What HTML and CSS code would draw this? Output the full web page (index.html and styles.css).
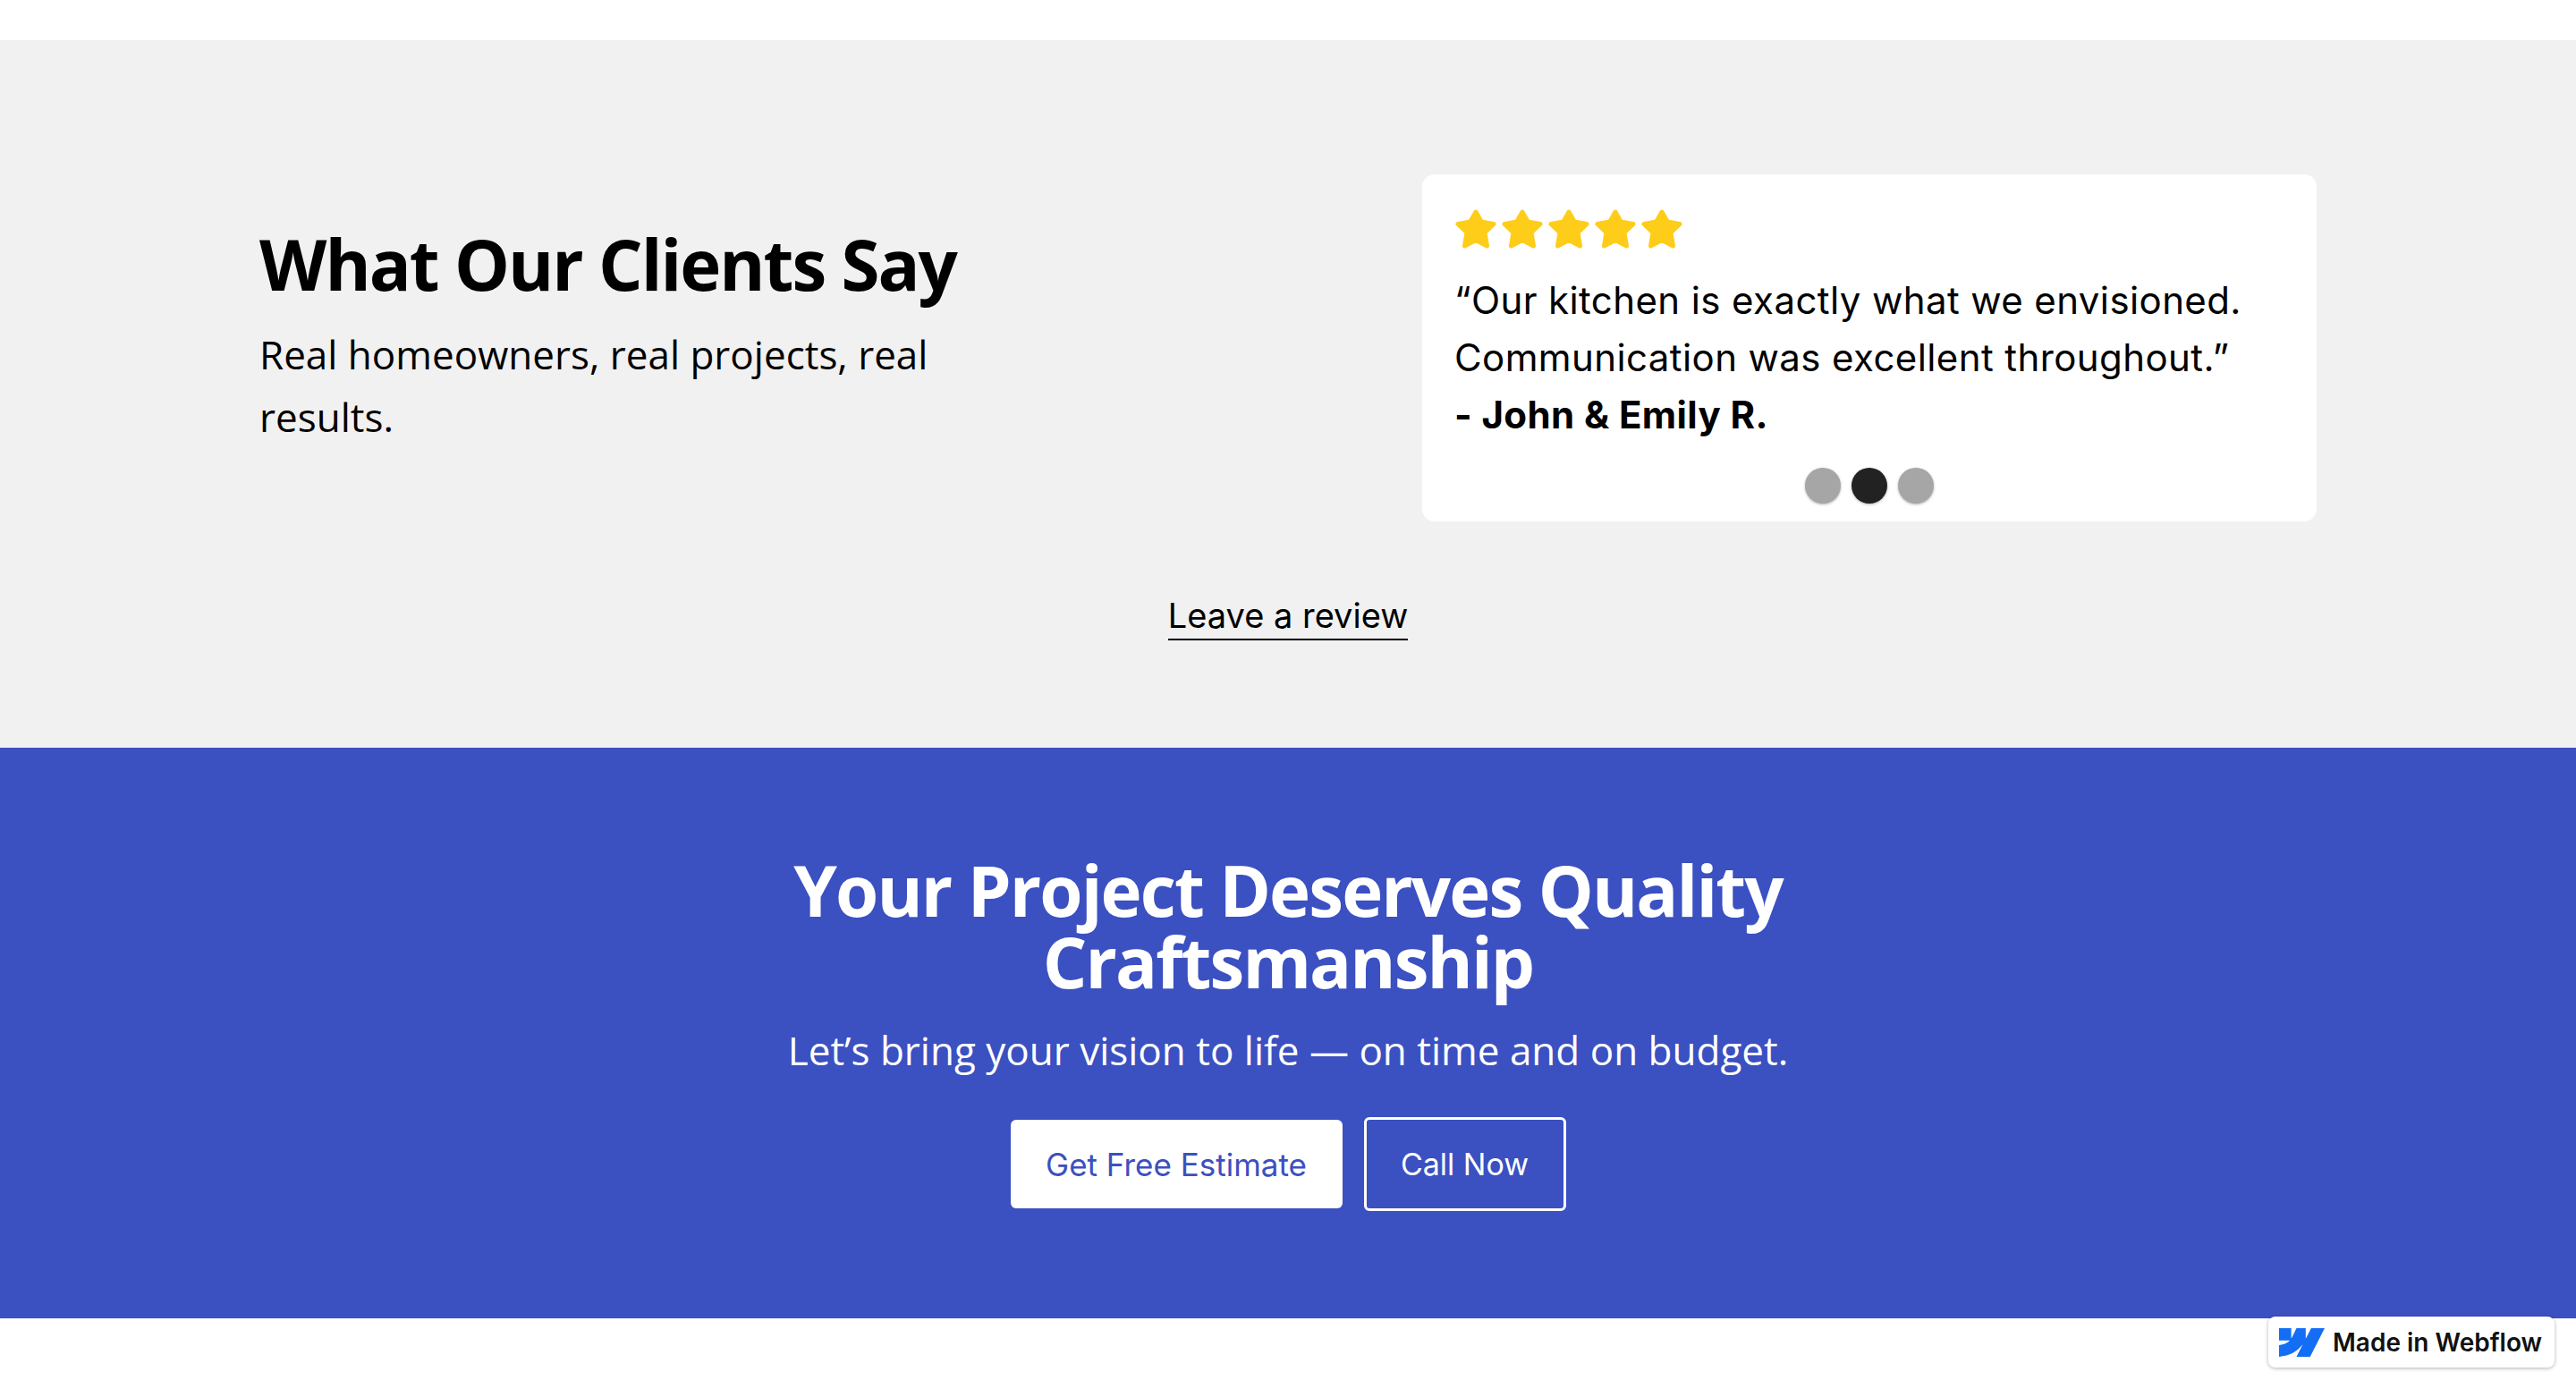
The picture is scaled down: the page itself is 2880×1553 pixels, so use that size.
FILE: index.html
```html
<!DOCTYPE html>
<html lang="en">
<head>
  <meta charset="UTF-8">
  <title>Testimonials</title>
  <link rel="stylesheet" href="styles.css">
</head>
<body>
  <section class="reviews">
    <div class="reviews-row">
      <div class="reviews-intro">
        <h2>What Our Clients Say</h2>
        <p>Real homeowners, real projects, real results.</p>
      </div>
      <div class="review-card">
        <div class="stars">
          <svg viewBox="0 0 46 44"><polygon points="23,3 29.300,14 43,16.500 33,26 35.500,41 23,34.500 10.500,41 13,26 3,16.500 16.700,14"/></svg>
          <svg viewBox="0 0 46 44"><polygon points="23,3 29.300,14 43,16.500 33,26 35.500,41 23,34.500 10.500,41 13,26 3,16.500 16.700,14"/></svg>
          <svg viewBox="0 0 46 44"><polygon points="23,3 29.300,14 43,16.500 33,26 35.500,41 23,34.500 10.500,41 13,26 3,16.500 16.700,14"/></svg>
          <svg viewBox="0 0 46 44"><polygon points="23,3 29.300,14 43,16.500 33,26 35.500,41 23,34.500 10.500,41 13,26 3,16.500 16.700,14"/></svg>
          <svg viewBox="0 0 46 44"><polygon points="23,3 29.300,14 43,16.500 33,26 35.500,41 23,34.500 10.500,41 13,26 3,16.500 16.700,14"/></svg>
        </div>
        <p class="quote">“Our kitchen is exactly what we envisioned.<br>Communication was excellent throughout.”<br><strong>- John &amp; Emily R.</strong></p>
        <div class="dots">
          <span class="dot"></span>
          <span class="dot active"></span>
          <span class="dot"></span>
        </div>
      </div>
    </div>
    <a class="review-link" href="#">Leave a review</a>
  </section>

  <section class="cta">
    <h2>Your Project Deserves Quality<br>Craftsmanship</h2>
    <p>Let’s bring your vision to life — on time and on budget.</p>
    <div class="cta-buttons">
      <a class="btn btn-white" href="#">Get Free Estimate</a>
      <a class="btn btn-outline" href="#">Call Now</a>
    </div>
  </section>

  <a class="wf-badge" href="#">
    <svg viewBox="0 4.515 24 14.970"><path d="M24 4.515L16.342 19.485H9.149L12.354 13.281H12.210C9.566 16.713 5.621 18.973 0 19.485V13.367C0 13.367 3.596 13.155 5.710 10.932H0V4.515H6.417V9.793L6.561 9.792L9.184 4.515H14.037V9.759L14.181 9.758L16.901 4.515H24Z"/></svg>
    <span>Made in Webflow</span>
  </a>
</body>
</html>
```
FILE: styles.css
```css
body { margin: 0; padding-top: 45px; background: white; font-family: "Open Sans", sans-serif; color: #000; height: 1508px; overflow: hidden; }
a { text-decoration: none; }

.reviews { background: #f1f1f1; height: 791px; box-sizing: border-box; padding: 150px 290px 0; }
.reviews-row { display: flex; justify-content: space-between; align-items: flex-start; }
.reviews-intro { width: 800px; padding-top: 60px; }
.reviews-intro h2 { margin: 0 0 26px; font-size: 78px; line-height: 80px; font-weight: 700; letter-spacing: -2px; }
.reviews-intro p { margin: 0; font-size: 44px; line-height: 70px; }

.review-card { width: 1000px; height: 388px; box-sizing: border-box; padding: 39px 37px 0; background: white; border-radius: 14px; font-family: Inter, sans-serif; }
.stars { display: flex; gap: 6px; height: 44px; }
.stars svg { width: 46px; height: 44px; fill: #fecd1a; stroke: #fecd1a; stroke-width: 5; stroke-linejoin: round; }
.quote { margin: 26px 0 0 -1px; font-size: 42px; line-height: 64px; letter-spacing: 0.4px; }
.quote strong { font-weight: 700; }
.dots { display: flex; justify-content: center; gap: 12px; margin-top: 27px; }
.dot { width: 40px; height: 40px; border-radius: 50%; background: #a6a6a6; box-shadow: 0 1px 3px rgba(0,0,0,0.3); }
.dot.active { background: #222; }

.review-link { display: block; width: fit-content; margin: 81px auto 0; padding-bottom: 2px; font-family: Inter, sans-serif; font-size: 38px; line-height: 48px; color: #000; border-bottom: 2px solid #000; }

.cta { background: #3b50c1; height: 638px; box-sizing: border-box; padding-top: 119px; text-align: center; color: white; }
.cta h2 { margin: 0; font-size: 78px; line-height: 80px; font-weight: 700; letter-spacing: -1.9px; }
.cta p { margin: 24px 0 0; font-size: 44px; line-height: 70px; }
.cta-buttons { display: flex; justify-content: center; align-items: center; gap: 24px; margin-top: 40px; }
.btn { font-family: Inter, sans-serif; font-size: 35px; border-radius: 6px; box-sizing: border-box; display: flex; align-items: center; justify-content: center; }
.btn-white { width: 371px; height: 99px; background: white; color: #3b50c1; }
.btn-outline { width: 226px; height: 105px; border: 3px solid white; color: white; font-size: 34px; }

.wf-badge { position: absolute; left: 2536px; top: 1472px; width: 320px; height: 57px; box-sizing: border-box; padding-left: 12px; display: flex; align-items: center; gap: 9px; background: white; border-radius: 8px; box-shadow: 0 1px 4px rgba(0,0,0,0.3); font-family: Inter, sans-serif; font-size: 28px; font-weight: 600; color: #111; }
.wf-badge svg { width: 51px; height: 32px; fill: #146ef5; }
```
